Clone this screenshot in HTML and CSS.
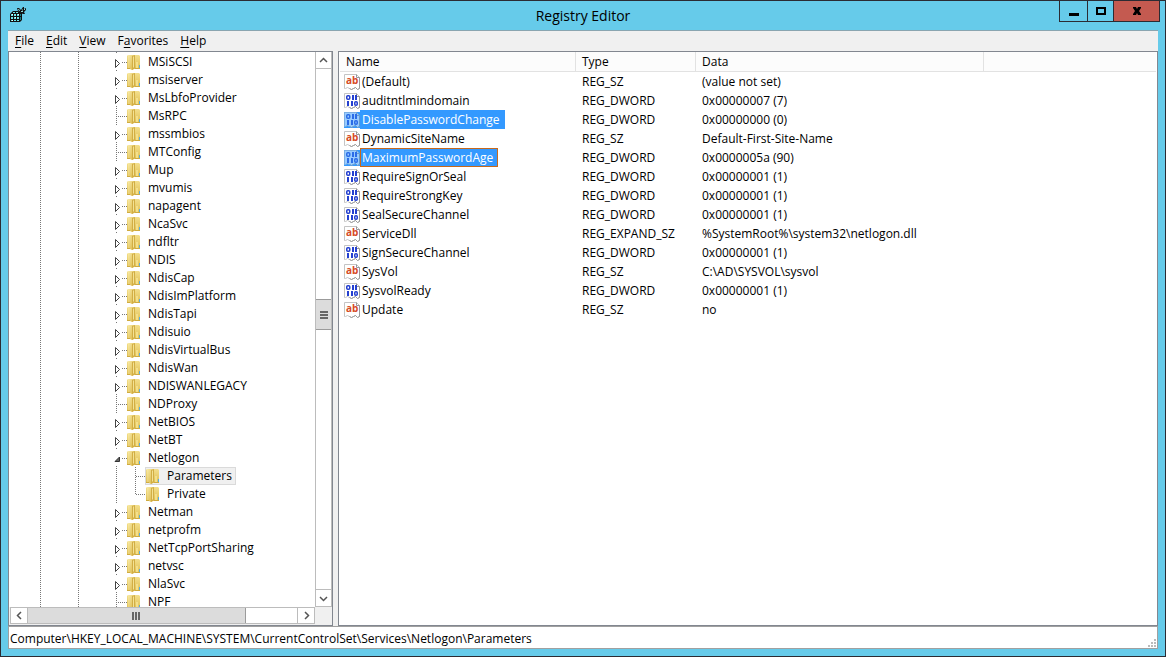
FILE: index.html
```html
<!DOCTYPE html>
<html lang="en">
<head>
    <meta charset="UTF-8">
    <meta name="viewport" content="width=device-width, initial-scale=1.0">
    <title>Registry Editor</title>
    <link rel="stylesheet" href="styles.css">
</head>
<body>

    <!-- Shared icons -->
    <svg class="sprite" aria-hidden="true">
        <defs>
            <linearGradient id="fold" x1="0" x2="1" y1="0" y2="1">
                <stop offset="0" stop-color="#f9eba6"/>
                <stop offset="1" stop-color="#d9b545"/>
            </linearGradient>
            <linearGradient id="cover" x1="0" x2="0" y1="0" y2="1">
                <stop offset="0" stop-color="#f3df8c"/>
                <stop offset="1" stop-color="#e0bf52"/>
            </linearGradient>
        </defs>
        <symbol id="folder" viewBox="0 0 14 16">
            <path d="M1 1h11l1 1v12l-1 1H1l-1-1V2z" fill="url(#cover)"/>
            <path d="M1 1h4l2 1v13l-2 1-4-2z" fill="url(#fold)"/>
            <path d="M5 2l3-1v13l-3 2z" fill="#d2ae45"/>
            <path d="M6 3l1-1v11l-1 1z" fill="#f3e294"/>
            <path d="M9 8h2v6H9z" fill="#f3e08c"/>
            <path d="M0 14h3v1H0zM8 14h5v1H8z" fill="#cfab40"/>
            <path d="M12 11h1v3h-1z" fill="#5aaee0"/>
        </symbol>
        <symbol id="closed" viewBox="0 0 7 11">
            <path d="M1.5 1.5v8l4-4z" fill="#fff" stroke="#444"/>
        </symbol>
        <symbol id="open" viewBox="0 0 7 11">
            <path d="M5.500 3v4.500H1z" fill="#666" stroke="#333"/>
        </symbol>
        <symbol id="page" viewBox="0 0 16 16">
            <path d="M.5.5h12l3 3v11l-2 1-2-2-2 1-2 1-2-1-2-1-2 1h-1z" fill="#fff" stroke="#c4c4c4"/>
            <path d="M12.5.5v3h3v11l-2 1-2-2-2 1-2 1-2-1" fill="none" stroke="#999"/>
        </symbol>
        <symbol id="string" viewBox="0 0 16 16">
            <use href="#page"/>
            <text x="2" y="10" class="ab">ab</text>
        </symbol>
        <symbol id="binary" viewBox="0 0 16 16">
            <use href="#page"/>
            <g fill="none" stroke="#2440d0" stroke-width="1.5">
                <rect x="2.750" y="2.750" width="3" height="3.500" rx="1"/>
                <rect x="10.750" y="8.750" width="2.500" height="3.500" rx="1"/>
            </g>
            <g fill="#2440d0">
                <rect x="8" y="2" width="2" height="5"/>
                <rect x="11" y="2" width="2" height="5"/>
                <rect x="3" y="8" width="2" height="5"/>
                <rect x="7" y="8" width="2" height="5"/>
            </g>
        </symbol>
    </svg>

    <header class="titlebar">
        <svg class="app-icon" viewBox="0 0 16 16" aria-hidden="true">
            <path d="M0 7l3-3h5l4 2v7l-2 2H0z" fill="#111"/>
            <path d="M3 5h2v1H3zM6 5h2v1H6zM1 7h2v2H1zM4 7h2v2H4zM7 7h2v2H7zM1 10h2v2H1zM4 10h2v2H4zM7 10h2v2H7zM1 13h2v1H1zM4 13h2v1H4zM7 13h2v1H7z" fill="#6fe9ec"/>
            <path d="M2 7h1v1H2zM5 10h1v1H5zM2 13h1v1H2zM8 7h1v1H8z" fill="#fff"/>
            <path d="M10 7h1v2h-1zM10 10h1v3h-1z" fill="#168085"/>
            <path d="M7 1h2l2 2 2-3h1v2l2-1v2l-2 2 1 2h-2l-2-1-3-2z" fill="#111"/>
            <path d="M8 2h1l1 2H9zM12 3l1-1v1l-1 1zM11 4h2v1h-2zM14 2h1v1h-1z" fill="#8dd9de"/>
        </svg>
        <h1>Registry Editor</h1>
        <div class="controls">
            <button class="minimize" aria-label="Minimize"><svg viewBox="0 0 12 12"><path d="M1 8h10v3H1z"/></svg></button>
            <button class="maximize" aria-label="Maximize"><svg viewBox="0 0 12 12"><path d="M1 2h10v8H1zM3 4v4h6V4z" fill-rule="evenodd"/></svg></button>
            <button class="close" aria-label="Close"><svg viewBox="0 0 12 12"><path d="M2 2h3l1 2 1-2h3v1L8 6l2 3v1H7L6 8l-1 2H2V9l2-3-2-3z"/></svg></button>
        </div>
    </header>

    <nav class="menu">
        <button><u>F</u>ile</button>
        <button><u>E</u>dit</button>
        <button><u>V</u>iew</button>
        <button>F<u>a</u>vorites</button>
        <button><u>H</u>elp</button>
    </nav>

    <main>
        <section class="pane keys">
            <ul class="tree">
                <li><button aria-label="Expand"><svg><use href="#closed"/></svg></button><a href="#"><svg><use href="#folder"/></svg>MSiSCSI</a></li>
                <li><button aria-label="Expand"><svg><use href="#closed"/></svg></button><a href="#"><svg><use href="#folder"/></svg>msiserver</a></li>
                <li><button aria-label="Expand"><svg><use href="#closed"/></svg></button><a href="#"><svg><use href="#folder"/></svg>MsLbfoProvider</a></li>
                <li class="leaf"><a href="#"><svg><use href="#folder"/></svg>MsRPC</a></li>
                <li><button aria-label="Expand"><svg><use href="#closed"/></svg></button><a href="#"><svg><use href="#folder"/></svg>mssmbios</a></li>
                <li class="leaf"><a href="#"><svg><use href="#folder"/></svg>MTConfig</a></li>
                <li><button aria-label="Expand"><svg><use href="#closed"/></svg></button><a href="#"><svg><use href="#folder"/></svg>Mup</a></li>
                <li><button aria-label="Expand"><svg><use href="#closed"/></svg></button><a href="#"><svg><use href="#folder"/></svg>mvumis</a></li>
                <li><button aria-label="Expand"><svg><use href="#closed"/></svg></button><a href="#"><svg><use href="#folder"/></svg>napagent</a></li>
                <li><button aria-label="Expand"><svg><use href="#closed"/></svg></button><a href="#"><svg><use href="#folder"/></svg>NcaSvc</a></li>
                <li><button aria-label="Expand"><svg><use href="#closed"/></svg></button><a href="#"><svg><use href="#folder"/></svg>ndfltr</a></li>
                <li><button aria-label="Expand"><svg><use href="#closed"/></svg></button><a href="#"><svg><use href="#folder"/></svg>NDIS</a></li>
                <li><button aria-label="Expand"><svg><use href="#closed"/></svg></button><a href="#"><svg><use href="#folder"/></svg>NdisCap</a></li>
                <li><button aria-label="Expand"><svg><use href="#closed"/></svg></button><a href="#"><svg><use href="#folder"/></svg>NdisImPlatform</a></li>
                <li><button aria-label="Expand"><svg><use href="#closed"/></svg></button><a href="#"><svg><use href="#folder"/></svg>NdisTapi</a></li>
                <li><button aria-label="Expand"><svg><use href="#closed"/></svg></button><a href="#"><svg><use href="#folder"/></svg>Ndisuio</a></li>
                <li><button aria-label="Expand"><svg><use href="#closed"/></svg></button><a href="#"><svg><use href="#folder"/></svg>NdisVirtualBus</a></li>
                <li><button aria-label="Expand"><svg><use href="#closed"/></svg></button><a href="#"><svg><use href="#folder"/></svg>NdisWan</a></li>
                <li><button aria-label="Expand"><svg><use href="#closed"/></svg></button><a href="#"><svg><use href="#folder"/></svg>NDISWANLEGACY</a></li>
                <li class="leaf"><a href="#"><svg><use href="#folder"/></svg>NDProxy</a></li>
                <li><button aria-label="Expand"><svg><use href="#closed"/></svg></button><a href="#"><svg><use href="#folder"/></svg>NetBIOS</a></li>
                <li><button aria-label="Expand"><svg><use href="#closed"/></svg></button><a href="#"><svg><use href="#folder"/></svg>NetBT</a></li>
                <li><button aria-label="Collapse"><svg><use href="#open"/></svg></button><a href="#"><svg><use href="#folder"/></svg>Netlogon</a>
                    <ul>
                        <li><a href="#" class="current"><svg><use href="#folder"/></svg>Parameters</a></li>
                        <li><a href="#"><svg><use href="#folder"/></svg>Private</a></li>
                    </ul>
                </li>
                <li><button aria-label="Expand"><svg><use href="#closed"/></svg></button><a href="#"><svg><use href="#folder"/></svg>Netman</a></li>
                <li><button aria-label="Expand"><svg><use href="#closed"/></svg></button><a href="#"><svg><use href="#folder"/></svg>netprofm</a></li>
                <li><button aria-label="Expand"><svg><use href="#closed"/></svg></button><a href="#"><svg><use href="#folder"/></svg>NetTcpPortSharing</a></li>
                <li><button aria-label="Expand"><svg><use href="#closed"/></svg></button><a href="#"><svg><use href="#folder"/></svg>netvsc</a></li>
                <li><button aria-label="Expand"><svg><use href="#closed"/></svg></button><a href="#"><svg><use href="#folder"/></svg>NlaSvc</a></li>
                <li class="leaf"><a href="#"><svg><use href="#folder"/></svg>NPF</a></li>
            </ul>
            <div class="vscroll">
                <button aria-label="Scroll up"><svg viewBox="0 0 9 9"><path d="M1 6l3.5-3.5L8 6"/></svg></button>
                <div class="track"><div class="thumb"></div></div>
                <button aria-label="Scroll down"><svg viewBox="0 0 9 9"><path d="M1 3l3.5 3.5L8 3"/></svg></button>
            </div>
            <div class="hscroll">
                <button aria-label="Scroll left"><svg viewBox="0 0 9 9"><path d="M6 1L2.500 4.500 6 8"/></svg></button>
                <div class="track"><div class="thumb"></div></div>
                <button aria-label="Scroll right"><svg viewBox="0 0 9 9"><path d="M3 1l3.500 3.500L3 8"/></svg></button>
            </div>
        </section>

        <section class="pane values">
            <table>
                <colgroup>
                    <col class="col-name">
                    <col class="col-type">
                    <col class="col-data">
                    <col>
                </colgroup>
                <thead>
                    <tr><th>Name</th><th>Type</th><th>Data</th><th></th></tr>
                </thead>
                <tbody>
                    <tr><td><svg><use href="#string"/></svg><span>(Default)</span></td><td>REG_SZ</td><td>(value not set)</td></tr>
                    <tr><td><svg><use href="#binary"/></svg><span>auditntlmindomain</span></td><td>REG_DWORD</td><td>0x00000007 (7)</td></tr>
                    <tr class="selected"><td><svg><use href="#binary"/></svg><span>DisablePasswordChange</span></td><td>REG_DWORD</td><td>0x00000000 (0)</td></tr>
                    <tr><td><svg><use href="#string"/></svg><span>DynamicSiteName</span></td><td>REG_SZ</td><td>Default-First-Site-Name</td></tr>
                    <tr class="selected focused"><td><svg><use href="#binary"/></svg><span>MaximumPasswordAge</span></td><td>REG_DWORD</td><td>0x0000005a (90)</td></tr>
                    <tr><td><svg><use href="#binary"/></svg><span>RequireSignOrSeal</span></td><td>REG_DWORD</td><td>0x00000001 (1)</td></tr>
                    <tr><td><svg><use href="#binary"/></svg><span>RequireStrongKey</span></td><td>REG_DWORD</td><td>0x00000001 (1)</td></tr>
                    <tr><td><svg><use href="#binary"/></svg><span>SealSecureChannel</span></td><td>REG_DWORD</td><td>0x00000001 (1)</td></tr>
                    <tr><td><svg><use href="#string"/></svg><span>ServiceDll</span></td><td>REG_EXPAND_SZ</td><td>%SystemRoot%\system32\netlogon.dll</td></tr>
                    <tr><td><svg><use href="#binary"/></svg><span>SignSecureChannel</span></td><td>REG_DWORD</td><td>0x00000001 (1)</td></tr>
                    <tr><td><svg><use href="#string"/></svg><span>SysVol</span></td><td>REG_SZ</td><td>C:\AD\SYSVOL\sysvol</td></tr>
                    <tr><td><svg><use href="#binary"/></svg><span>SysvolReady</span></td><td>REG_DWORD</td><td>0x00000001 (1)</td></tr>
                    <tr><td><svg><use href="#string"/></svg><span>Update</span></td><td>REG_SZ</td><td>no</td></tr>
                </tbody>
            </table>
        </section>
    </main>

    <footer>
        <span>Computer\HKEY_LOCAL_MACHINE\SYSTEM\CurrentControlSet\Services\Netlogon\Parameters</span>
        <svg class="grip" viewBox="0 0 8 8" aria-hidden="true"><path d="M6 0h2v2H6zM3 3h2v2H3zM6 3h2v2H6zM0 6h2v2H0zM3 6h2v2H3zM6 6h2v2H6z"/></svg>
    </footer>

</body>
</html>
```
FILE: styles.css
```css
* {
    box-sizing: border-box;
}
body {
    display: flex;
    flex-direction: column;
    height: 100vh;
    margin: 0;
    padding: 0 7px 7px;
    border: 1px solid #2b2b33;
    background: #66cbea;
    color: #000;
    font: 12px/18px "Open Sans", "Noto Sans", sans-serif;
}
button {
    display: flex;
    align-items: center;
    justify-content: center;
    padding: 0;
    border: 0;
    background: none;
    color: inherit;
    font: inherit;
}
a {
    color: inherit;
    text-decoration: none;
}
svg {
    display: block;
    flex: none;
}
symbol {
    overflow: visible;
}
.sprite {
    position: absolute;
    width: 0;
    height: 0;
}

/* Title bar */
.titlebar {
    display: grid;
    grid-template-columns: 100px 1fr 102px;
    height: 29px;
    flex: none;
    margin-right: -2px;
}
.app-icon {
    width: 16px;
    height: 16px;
    margin: 6px 2px;
}
h1 {
    margin: 0;
    font-size: 14px;
    font-weight: normal;
    line-height: 29px;
    text-align: center;
}
.controls {
    display: flex;
    justify-self: end;
    height: 21px;
}
.controls button {
    width: 26px;
    border: solid #2b2b33;
    border-width: 0 0 1px 1px;
}
.controls .minimize {
    width: 28px;
}
.controls .close {
    width: 47px;
    border-right-width: 1px;
    background: #c45a50;
}
.controls svg {
    width: 12px;
    height: 12px;
}

/* Menu */
.menu {
    display: flex;
    flex: none;
    height: 21px;
    padding-left: 1px;
    border-top: 1px solid #8aa5b0;
    background: #f0f0f0;
}
.menu button {
    padding: 0 6px;
}
.menu u {
    text-underline-offset: 2px;
}

/* Panes */
main {
    display: grid;
    grid-template-columns: 325px 1fr;
    gap: 5px;
    flex: 1;
    min-height: 0;
    background: #f0f0f0;
}
.pane {
    min-height: 0;
    overflow: hidden;
    border: 1px solid #828790;
    background: #fff;
}
.keys {
    display: grid;
    grid-template-columns: 1fr 17px;
    grid-template-rows: 1fr 17px;
    padding-bottom: 1px;
    background: #f0f0f0;
}

/* Key tree: each dotted guide is a 1px wide strip */
.tree {
    min-height: 0;
    margin: 0;
    padding: 1px 0 0 104px;
    overflow: hidden;
    list-style: none;
    background-color: #fff;
    background-image: repeating-linear-gradient(#777 0 1px, #fff 1px 2px), repeating-linear-gradient(#777 0 1px, #fff 1px 2px), repeating-linear-gradient(#777 0 1px, #fff 1px 2px);
    background-position: 31px 0, 69px 0, 107px 0;
    background-size: 1px 100%;
    background-repeat: no-repeat;
}
.tree li {
    display: flex;
    flex-wrap: wrap;
    align-items: center;
}
.tree button {
    width: 8px;
    height: 16px;
    padding-top: 2px;
    background: #fff;
}
.tree button svg {
    width: 7px;
    height: 11px;
}
.tree a {
    display: flex;
    order: 2;
    align-items: center;
    height: 18px;
    padding-right: 3px;
}
.tree a svg {
    width: 14px;
    height: 16px;
    margin-right: 7px;
}
.tree li::before {
    content: "";
    order: 1;
    width: 6px;
    height: 1px;
    background: repeating-linear-gradient(90deg, #fff 0 1px, #777 1px 2px);
}
.tree .leaf::before {
    width: 10px;
    margin-left: 4px;
}
.tree ul {
    order: 3;
    width: 100%;
    margin: 0;
    padding: 0 0 0 22px;
    list-style: none;
    background: repeating-linear-gradient(#777 0 1px, #fff 1px 2px) 22px 0 / 1px 27px no-repeat;
}
.tree ul li::before {
    width: 10px;
}
.tree ul a {
    border: 1px solid transparent;
}
.tree ul .current {
    border-color: #dadada;
    background: #f0f0f0;
}

/* Scroll bars */
.vscroll,
.hscroll {
    display: flex;
    background: #fff;
    border: 1px solid #bcbcbc;
}
.vscroll {
    flex-direction: column;
    border-top: 0;
}
.hscroll {
    margin-left: 1px;
}
.vscroll button,
.hscroll button {
    flex: none;
    width: 16px;
    height: 16px;
}
.vscroll button {
    width: 100%;
}
.hscroll button {
    height: 100%;
}
.vscroll button svg,
.hscroll button svg {
    width: 9px;
    height: 9px;
    fill: none;
    stroke: #555;
    stroke-width: 1.5;
}
.track {
    display: flex;
    flex: 1;
    border: solid #bcbcbc;
    border-width: 0 1px;
}
.vscroll .track {
    flex-direction: column;
    border-width: 1px 0;
}
.thumb {
    display: flex;
    align-items: center;
    justify-content: center;
    background: #dcdcdc;
}
.thumb::before {
    content: "";
    width: 8px;
    height: 8px;
}
.vscroll .thumb {
    height: 31px;
    margin-top: 230px;
    border: solid #9b9b9b;
    border-width: 1px 0;
}
.vscroll .thumb::before {
    background: repeating-linear-gradient(#666 0 2px, #dcdcdc 2px 3px);
}
.hscroll .thumb {
    width: 81%;
    border-right: 1px solid #9b9b9b;
}
.hscroll .thumb::before {
    background: repeating-linear-gradient(90deg, #666 0 2px, #dcdcdc 2px 3px);
}

/* Value list */
table {
    width: 100%;
    padding: 0 1px;
    border-spacing: 0;
    table-layout: fixed;
}
.col-name {
    width: 236px;
}
.col-type {
    width: 120px;
}
.col-data {
    width: 288px;
}
th {
    height: 20px;
    padding: 1px 6px 0;
    border: solid #e2e2e2;
    border-width: 0 1px 1px 0;
    background: #fcfcfc;
    font-weight: normal;
    text-align: left;
}
th:last-child {
    border-right: 0;
}
td {
    height: 19px;
    padding: 0 6px;
    white-space: nowrap;
}
td:first-child {
    display: flex;
    align-items: center;
    padding: 0 4px;
}
td svg {
    width: 16px;
    height: 16px;
}
td span {
    padding: 0 5px 0 2px;
    line-height: 19px;
}
.selected span {
    background: #3399ff;
    color: #fff;
}
.selected svg {
    background: #3399ff;
}
.selected use {
    opacity: 0.5;
}
.focused span {
    padding: 0 4px 0 1px;
    border: 1px solid #c8691c;
    line-height: 17px;
}
.ab {
    fill: #d64a26;
    font: bold 10px "Open Sans", sans-serif;
}

/* Status bar */
footer {
    display: flex;
    align-items: center;
    justify-content: space-between;
    flex: none;
    height: 23px;
    padding: 2px 1px 0;
    border: 1px solid #a0a0a0;
    background: #fff;
}
.grip {
    align-self: flex-end;
    width: 8px;
    height: 8px;
    margin-bottom: 1px;
    fill: #bbb;
}
```
